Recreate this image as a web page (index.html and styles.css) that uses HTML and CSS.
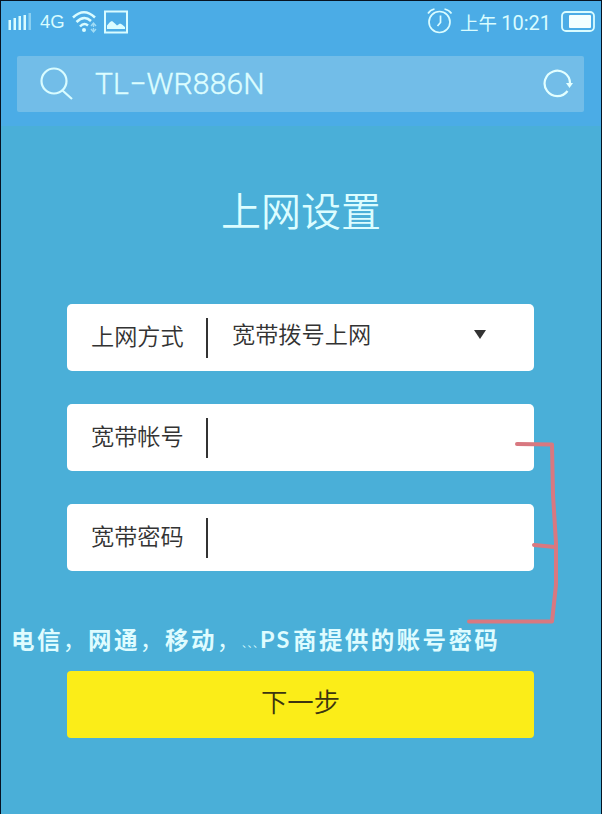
FILE: index.html
```html
<!DOCTYPE html>
<html lang="zh-CN">
<head>
<meta charset="utf-8">
<title>上网设置</title>
<link rel="stylesheet" href="styles.css">
</head>
<body>
<div class="screen">
  <header class="top">
    <div class="status">
      <svg class="signal" width="24" height="20" viewBox="0 0 24 20" fill="#d9fcff"><path d="M.5 8h2.500v10H.5zM5.500 6h2.500v12H5.500zM10.500 4h2.500v14h-2.500zM15.500 3h2.500v15h-2.500z"/><path opacity=".45" d="M20.500 1h2.500v17h-2.500z"/></svg>
      <span class="net">4G</span>
      <svg class="wifi" width="27" height="24" viewBox="0 0 27 24" fill="none" stroke="#d9fcff" stroke-width="2.5"><path d="M1 7.500Q12 -3 23 7.500M4.500 12Q12 4.500 19 11M8 16.500Q12 12 16 15.500"/><circle cx="12" cy="20" r="2" fill="#d9fcff" stroke="none"/><path opacity=".6" stroke-width="1.400" d="M19 16l2.500-3 2.500 3M21.500 14v3M19 19l2.500 3 2.500-3M21.500 18v3"/></svg>
      <svg class="photo" width="24" height="24" viewBox="0 0 24 24"><rect x="1" y="1.500" width="22" height="21" fill="none" stroke="#d9fcff" stroke-width="2"/><path fill="#d9fcff" d="M3 19v-3.500l3-3.500 2-1 3 2.500 2 2 3-2 2 1 3 2.500v2z"/></svg>
      <svg class="alarm" width="26" height="28" viewBox="0 0 26 28" fill="none" stroke="#d9fcff" stroke-width="1.700"><circle cx="12.500" cy="15" r="10.500"/><path d="M1 6.500Q3 3 7.500 2M17.500 2Q22 3 24.500 6.500M13.500 8.500V15.500L10.500 19"/></svg>
      <span class="time">上午 <span class="clock">10:21</span></span>
      <svg class="battery" width="34" height="22" viewBox="0 0 34 22"><rect x="1" y="1" width="32" height="19" rx="4" fill="none" stroke="#d9fcff" stroke-width="1.800"/><rect x="8" y="4" width="22" height="13" rx="1" fill="#f4ffff"/></svg>
    </div>
    <div class="search">
      <svg class="glass" width="34" height="34" viewBox="0 0 34 34" fill="none" stroke="#d9fcff" stroke-width="2.200"><circle cx="14" cy="14" r="12.500"/><path d="M22.500 23.500L32 32"/></svg>
      <span class="ssid">TL−WR886N</span>
      <svg class="reload" width="30" height="30" viewBox="0 0 30 30" fill="none" stroke="#e2ffff" stroke-width="2.200"><path d="M24.500 22A12.700 12.700 0 1 1 27 14"/><path d="M23 14h7l-3.500 5z" fill="#e2ffff" stroke="none"/></svg>
    </div>
  </header>
  <main class="page">
    <h1 class="title">上网设置</h1>
    <div class="row"><span class="label">上网方式</span><i class="bar"></i><span class="value">宽带拨号上网</span><svg class="caret" width="12" height="9" viewBox="0 0 12 9"><path fill="#333" d="M0 0h12L6 9z"/></svg></div>
    <div class="row"><span class="label">宽带帐号</span><i class="bar"></i></div>
    <div class="row"><span class="label">宽带密码</span><i class="bar"></i></div>
    <div class="note"><span class="part">电信<em class="comma">，</em></span><span class="part">网通<em class="comma">，</em></span><span class="part">移动<em class="comma">，</em></span><span class="dots">﹑﹑﹑</span><span class="latin">PS</span><span>商提供的账号密码</span></div>
    <button class="next">下一步</button>
  </main>
  <svg class="bracket" width="92" height="186" viewBox="0 0 92 186" fill="none" stroke="#d87880" stroke-width="4" stroke-linecap="round" stroke-linejoin="round"><path d="M52 8L87 8.500L88 59L91 107V149L87 185.500H4"/><path d="M69 109L90 111"/></svg>
</div>
</body>
</html>
```
FILE: styles.css
```css
* { box-sizing: border-box; }
body { margin: 0; font-family: "Noto Sans CJK SC", sans-serif; }
.screen {
  position: relative;
  width: 602px;
  height: 814px;
  overflow: hidden;
  border: 1px solid #061322;
  border-bottom: 0;
  background: #4aafd8;
}
.top { height: 125px; background: #4bace6; }
.status {
  display: flex;
  align-items: center;
  height: 42px;
  padding: 0 6px 0 7px;
  color: #d9fcff;
}
.net { margin-left: 8px; width: 32px; font: 18.5px/42px "Liberation Sans", sans-serif; }
.photo { margin-left: 5px; }
.alarm { margin-left: auto; margin-top: -2px; }
.time { margin: 0 0 0 7px; width: 101px; font-size: 18.5px; font-weight: 400; white-space: nowrap; }
.clock { font: 20px Roboto, sans-serif; }
.search {
  display: flex;
  align-items: center;
  width: 567px;
  height: 56px;
  margin: 13px 0 0 16px;
  padding: 0 11px 0 23px;
  border-radius: 2px;
  background: #72bde8;
}
.ssid {
  flex: 1;
  margin-left: 21px;
  color: #dcfdff;
  font: 350 30px/56px Roboto, sans-serif;
  letter-spacing: .2px;
  -webkit-text-stroke: .4px #dcfdff;
}
.title {
  margin: 0;
  padding-top: 54px;
  height: 178px;
  color: #dcfdff;
  font-size: 40px;
  font-weight: 350;
  line-height: 58px;
  text-align: center;
}
.row {
  display: flex;
  align-items: center;
  width: 467px;
  height: 67px;
  margin: 0 0 33px 66px;
  padding-left: 24px;
  border-radius: 5px;
  background: #fff;
  color: #333;
  font-size: 23.2px;
  font-weight: 350;
}
.label { width: 115px; margin-top: -6px; }
.bar { width: 2px; height: 40px; background: #333; }
.value { width: 242px; margin: -9px 0 0 24px; }
.caret { margin-top: -6px; }
.note {
  display: flex;
  height: 40px;
  margin: 48px 0 12px 10px;
  color: #dffcff;
  font-size: 23.5px;
  font-weight: 700;
  line-height: 40px;
  letter-spacing: 2.4px;
  white-space: nowrap;
}
.part { width: 77px; }
.comma { font-style: normal; font-weight: 400; letter-spacing: -10px; }
.dots { width: 18px; font-size: 12px; font-weight: 400; letter-spacing: -6.5px; line-height: 46px; }
.latin { width: 33px; font-family: Lato, sans-serif; letter-spacing: 2px; }
.part:nth-child(3) { width: 73px; }
.dots { width: 22px; }
.next {
  display: block;
  width: 467px;
  height: 67px;
  margin-left: 66px;
  padding: 0 0 9px;
  border: 0;
  border-radius: 4px;
  background: #fbed18;
  color: #3c3510;
  font: 350 26.4px "Noto Sans CJK SC", sans-serif;
}
.bracket { position: absolute; left: 464px; top: 435px; overflow: visible; }
```
